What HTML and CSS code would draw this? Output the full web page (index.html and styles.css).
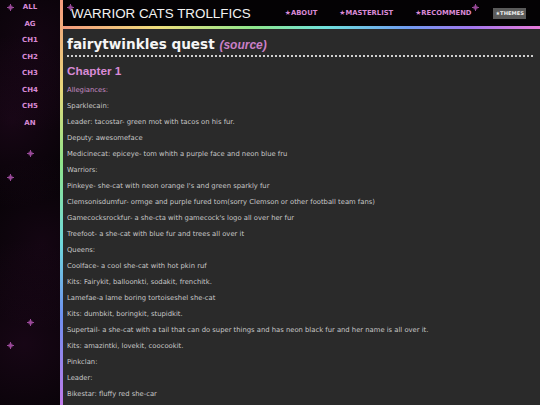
FILE: index.html
```
<!DOCTYPE html>
<html>
<head>
<meta charset="utf-8">
<link rel="stylesheet" href="styles.css">
</head>
<body>
<aside class="sidebar">
  <nav class="chapters">
    <a>ALL</a><a>AG</a><a>CH1</a><a>CH2</a><a>CH3</a><a>CH4</a><a>CH5</a><a>AN</a>
  </nav>
  <span class="spark s1"></span>
  <span class="spark s2"></span>
  <span class="spark s3"></span>
  <span class="spark s4"></span>
  <span class="spark s5"></span>
</aside>
<div class="main">
  <header class="top">
    <h1 class="site">WARRIOR CATS TROLLFICS</h1>
    <nav class="links">
      <a>★ABOUT</a><a>★MASTERLIST</a><a>★RECOMMEND</a>
    </nav>
    <button class="themes">★THEMES</button>
    <span class="spark s6"></span>
    <span class="spark s7"></span>
  </header>
  <section class="content">
    <h2 class="title">fairytwinkles quest <em>(source)</em></h2>
    <h3 class="chapter">Chapter 1</h3>
    <p class="pink">Allegiances:</p>
    <p>Sparklecain:</p>
    <p>Leader: tacostar- green mot with tacos on his fur.</p>
    <p>Deputy: awesomeface</p>
    <p>Medicinecat: epiceye- tom whith a purple face and neon blue fru</p>
    <p>Warriors:</p>
    <p>Pinkeye- she-cat with neon orange I's and green sparkly fur</p>
    <p>Clemsonisdumfur- ormge and purple fured tom(sorry Clemson or other football team fans)</p>
    <p>Gamecocksrockfur- a she-cta with gamecock's logo all over her fur</p>
    <p>Treefoot- a she-cat with blue fur and trees all over it</p>
    <p>Queens:</p>
    <p>Coolface- a cool she-cat with hot pkin ruf</p>
    <p>Kits: Fairykit, balloonkti, sodakit, frenchitk.</p>
    <p>Lamefae-a lame boring tortoiseshel she-cat</p>
    <p>Kits: dumbkit, boringkit, stupidkit.</p>
    <p>Supertail- a she-cat with a tail that can do super things and has neon black fur and her name is all over it.</p>
    <p>Kits: amazintki, lovekit, coocookit.</p>
    <p>Pinkclan:</p>
    <p>Leader:</p>
    <p>Bikestar: fluffy red she-car</p>
  </section>
</div>
</body>
</html>
```
FILE: styles.css
```
html, body {
  margin: 0;
  padding: 0;
  height: 405px;
  overflow: hidden;
  background: #000;
}
body {
  display: flex;
  font-family: "DejaVu Sans", Verdana, sans-serif;
}
.sidebar {
  position: relative;
  width: 60px;
  flex: none;
  height: 405px;
  background:
    radial-gradient(circle at 20% 30%, rgba(110,25,100,0.18), transparent 30%),
    radial-gradient(circle at 70% 60%, rgba(110,25,100,0.15), transparent 35%),
    radial-gradient(circle at 40% 85%, rgba(110,25,100,0.18), transparent 30%),
    radial-gradient(circle at 60% 10%, rgba(110,25,100,0.15), transparent 25%),
    #040204;
}
.chapters {
  display: flex;
  flex-direction: column;
  align-items: center;
  padding-top: 1px;
}
.chapters a {
  display: block;
  height: 16.5px;
  line-height: 12px;
  font-size: 7px;
  font-weight: bold;
  color: #d98ad6;
}
.spark {
  position: absolute;
  width: 7px;
  height: 7px;
  opacity: 0.75;
  background:
    linear-gradient(#c860c8, #c860c8) center / 1px 100% no-repeat,
    linear-gradient(#c860c8, #c860c8) center / 100% 1px no-repeat,
    radial-gradient(circle, rgba(230,110,230,0.9) 0 1px, transparent 3px);
}
.s1 { left: 7px; top: 4px; }
.s2 { left: 27px; top: 150px; }
.s3 { left: 7px; top: 174px; }
.s4 { left: 27px; top: 319px; }
.s5 { left: 7px; top: 342px; }
.s6 { left: 4px; top: 4px; }
.s7 { left: 409px; top: 4px; }
.main {
  flex: 1;
  display: flex;
  flex-direction: column;
  border-left: 3px solid;
  border-image: linear-gradient(180deg, #f39a7c 0%, #e8d77a 22%, #8fe38a 40%, #6fd8dc 60%, #6f8ff0 78%, #c07ae8 100%) 1;
}
.top {
  position: relative;
  height: 26px;
  flex: none;
  display: flex;
  align-items: center;
  background: #040204;
  border-bottom: 3px solid;
  border-image: linear-gradient(90deg, #f39a7c 0%, #eedc7c 20%, #8ee68c 40%, #6fe0dc 55%, #6f9cf0 72%, #9f78ee 85%, #e87ad8 100%) 1;
}
.site {
  margin: 0 0 0 8px;
  font-family: "Liberation Sans", Arial, sans-serif;
  font-size: 13.4px;
  font-weight: normal;
  color: #f2f2f2;
  white-space: nowrap;
}
.links {
  display: flex;
  gap: 22px;
  margin-left: auto;
}
.links a {
  font-size: 6.8px;
  font-weight: bold;
  color: #d98ad6;
  white-space: nowrap;
}
.themes {
  margin: 0 14px 0 22px;
  background: #5a5a5a;
  border: none;
  color: #eee;
  font-family: "DejaVu Sans", sans-serif;
  font-size: 5.2px;
  font-weight: bold;
  padding: 0 2px;
  height: 11px;
  line-height: 11px;
}
.content {
  flex: 1;
  background: #2a2a2a;
  padding: 6px 7px 0 4px;
}
.title {
  margin: 0;
  font-family: "DejaVu Sans", Verdana, sans-serif;
  font-size: 13.6px;
  font-weight: bold;
  color: #f5f5f5;
  line-height: 19px;
  border-bottom: 2px dotted #cfcfcf;
}
.title em {
  font-family: "Liberation Sans", Arial, sans-serif;
  font-size: 12px;
  font-weight: bold;
  color: #c97fc7;
  font-style: italic;
}
.chapter {
  margin: 6px 0 0;
  font-family: "Liberation Sans", Arial, sans-serif;
  font-size: 11.8px;
  font-weight: bold;
  color: #d98ad6;
  line-height: 16px;
}
.content p {
  margin: 0;
  font-size: 6.8px;
  line-height: 16px;
  color: #c8c8c8;
}
.content p.pink {
  color: #c78ac5;
  margin-top: 3px;
}
```
